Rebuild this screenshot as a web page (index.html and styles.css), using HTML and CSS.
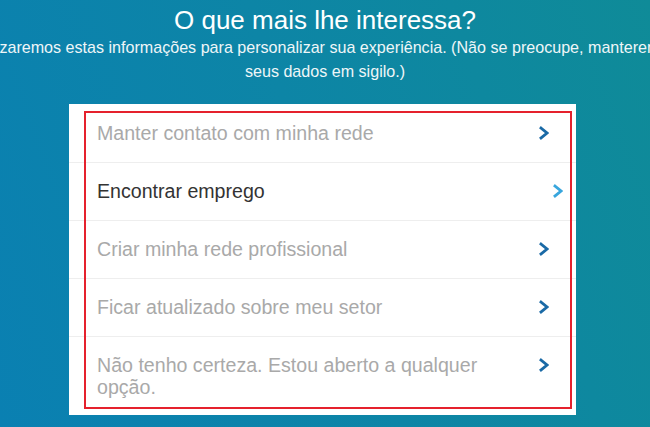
FILE: index.html
```html
<!DOCTYPE html>
<html lang="pt-BR">
<head>
<meta charset="utf-8">
<title>O que mais lhe interessa?</title>
<link rel="stylesheet" href="styles.css">
</head>
<body>
<main class="page">
  <header class="intro">
    <h1 class="intro-title">O que mais lhe interessa?</h1>
    <p class="intro-text">Utilizaremos estas informações para personalizar sua experiência. (Não se preocupe, manteremos<br>seus dados em sigilo.)</p>
  </header>
  <section class="card">
    <ul class="options">
      <li class="option"><span class="option-label">Manter contato com minha rede</span><svg class="chev" width="10" height="14" viewBox="0 0 10 14"><polyline points="2,2 8,7 2,12"/></svg></li>
      <li class="option option-active"><span class="option-label">Encontrar emprego</span><svg class="chev" width="10" height="14" viewBox="0 0 10 14"><polyline points="2,2 8,7 2,12"/></svg></li>
      <li class="option"><span class="option-label">Criar minha rede profissional</span><svg class="chev" width="10" height="14" viewBox="0 0 10 14"><polyline points="2,2 8,7 2,12"/></svg></li>
      <li class="option"><span class="option-label">Ficar atualizado sobre meu setor</span><svg class="chev" width="10" height="14" viewBox="0 0 10 14"><polyline points="2,2 8,7 2,12"/></svg></li>
      <li class="option option-tall"><span class="option-label">Não tenho certeza. Estou aberto a qualquer opção.</span><svg class="chev" width="10" height="14" viewBox="0 0 10 14"><polyline points="2,2 8,7 2,12"/></svg></li>
    </ul>
    <div class="highlight"></div>
  </section>
</main>
</body>
</html>
```

FILE: styles.css
```css
html, body {
  margin: 0;
  padding: 0;
  height: 100%;
  overflow: hidden;
}
body {
  font-family: "Liberation Sans", Arial, sans-serif;
  background: linear-gradient(70deg, #0a80b2 0%, #0d85a6 50%, #0f8b98 100%);
}
.page {
  display: flex;
  flex-direction: column;
}
.intro {
  display: flex;
  flex-direction: column;
  align-items: center;
  padding-top: 5px;
  color: #fff;
}
.intro-title {
  margin: 0;
  font-size: 26px;
  line-height: 30px;
  font-weight: normal;
  white-space: nowrap;
}
.intro-text {
  margin: 0;
  font-size: 16.1px;
  line-height: 24px;
  text-align: center;
  white-space: nowrap;
  color: #eef6f8;
}
.card {
  position: relative;
  margin: 21px 0 0 69px;
  width: 507px;
  background: #fff;
}
.options {
  list-style: none;
  margin: 0;
  padding: 0;
}
.option {
  display: flex;
  align-items: center;
  gap: 20px;
  padding: 18px 27px 18px 28px;
  font-size: 19.6px;
  line-height: 22px;
  color: #a9a9a9;
  border-top: 1px solid #eeeeee;
}
.option:first-child {
  border-top: none;
}
.option + .option {
  padding-top: 17px;
}
.option-tall {
  align-items: flex-start;
  padding-bottom: 17px;
}
.option-tall .chev {
  margin-top: 4px;
}
.option-label {
  flex: 1;
}
.chev {
  flex: none;
  fill: none;
  stroke: #1a6aa6;
  stroke-width: 2.8;
  stroke-linecap: square;
}
.option-active {
  color: #333;
  padding-right: 13px;
}
.option-active .chev {
  stroke: #38a6dd;
}
.highlight {
  position: absolute;
  top: 7px;
  left: 15px;
  right: 4px;
  bottom: 6px;
  border: 2px solid #e5212d;
  pointer-events: none;
}
```
